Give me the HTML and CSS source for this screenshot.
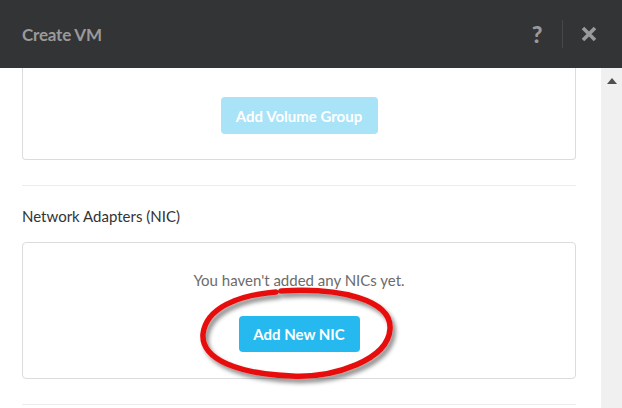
FILE: index.html
```html
<!DOCTYPE html>
<html>
<head>
<meta charset="utf-8">
<link rel="stylesheet" href="styles.css">
</head>
<body>
<header class="header">
  <div class="title">Create VM</div>
  <div class="actions">
    <span class="help">?</span>
    <span class="sep"></span>
    <svg class="close" width="16" height="16" viewBox="0 0 16 16"><path d="M2 2 L14 14 M14 2 L2 14" stroke="#9a9a9a" stroke-width="3.6" stroke-linecap="butt"/></svg>
  </div>
</header>
<div class="main">
  <div class="content">
    <div class="card card-top">
      <button class="btn btn-disabled">Add Volume Group</button>
    </div>
    <hr class="divider">
    <div class="section-title">Network Adapters (NIC)</div>
    <div class="card card-nic">
      <div class="empty">You haven't added any NICs yet.</div>
      <button class="btn btn-primary">Add New NIC</button>
    </div>
    <hr class="divider divider-2">
  </div>
  <div class="scrollbar">
    <svg width="10" height="6" viewBox="0 0 10 6"><path d="M0 6 L5 0 L10 6 Z" fill="#505050"/></svg>
  </div>
</div>
<svg class="annot" width="622" height="408" viewBox="0 0 622 408">
  <defs>
    <filter id="sh" x="-20%" y="-20%" width="140%" height="160%">
      <feDropShadow dx="3" dy="4" stdDeviation="2.2" flood-color="#000" flood-opacity="0.45"/>
    </filter>
  </defs>
  <path filter="url(#sh)" d="M281 291 C 340 287, 392 300, 390 329 C 388 360, 334 378, 292 376 C 240 374, 201 360, 203 334 C 206 308, 238 295, 276 292" fill="none" stroke="#e8100f" stroke-width="5.5" stroke-linecap="round"/>
</svg>
</body>
</html>
```
FILE: styles.css
```css
* { box-sizing: border-box; }
html, body { margin: 0; padding: 0; }
body {
  width: 622px;
  height: 408px;
  overflow: hidden;
  font-family: Lato, "Open Sans", Arial, sans-serif;
  background: #fff;
  position: relative;
}
.header {
  height: 68px;
  background: #333436;
  display: flex;
  align-items: center;
  justify-content: space-between;
  padding: 0 0 0 22px;
}
.title {
  color: #9a9a9a;
  font-weight: 700;
  font-size: 17px;
  letter-spacing: -0.2px;
}
.actions {
  display: flex;
  align-items: center;
  height: 100%;
}
.help {
  color: #9a9a9a;
  font-weight: 900;
  font-size: 23px;
  width: 14px;
  text-align: center;
  margin-right: 18px;
}
.sep {
  width: 1px;
  height: 28px;
  background: #464749;
  margin-right: 18px;
}
.close { margin-right: 25px; }
.main {
  display: flex;
  height: 340px;
}
.content {
  width: 601px;
  padding: 0 25px 0 22px;
  overflow: hidden;
}
.scrollbar {
  width: 21px;
  background: #f0f0f0;
  display: flex;
  justify-content: center;
  padding-top: 10px;
}
.scrollbar svg { display: block; }
.card {
  border: 1px solid #dcdcdc;
  border-radius: 4px;
  display: flex;
  flex-direction: column;
  align-items: center;
}
.card-top {
  border-top: none;
  border-top-left-radius: 0;
  border-top-right-radius: 0;
  height: 92px;
  padding-top: 29px;
}
.btn {
  border: none;
  border-radius: 4px;
  color: #fff;
  font-family: Lato, "Open Sans", Arial, sans-serif;
  font-weight: 700;
  font-size: 15px;
  height: 37px;
  padding: 0;
}
.btn-disabled { background: #a8e3f8; width: 157px; }
.btn-primary { background: #25b9ef; width: 121px; height: 36px; }
.divider {
  border: none;
  border-top: 1px solid #ececec;
  margin: 25px 0 0 0;
  height: 0;
}
.section-title {
  font-size: 15px;
  color: #333;
  margin-top: 21px;
  line-height: 18px;
}
.card-nic {
  margin-top: 17px;
  height: 137px;
  padding-top: 28px;
}
.empty {
  font-size: 15px;
  color: #6b6b6b;
  line-height: 18px;
  margin-bottom: 27px;
}
.divider-2 { margin-top: 25px; }
.annot {
  position: absolute;
  left: 0;
  top: 0;
  pointer-events: none;
}
```
